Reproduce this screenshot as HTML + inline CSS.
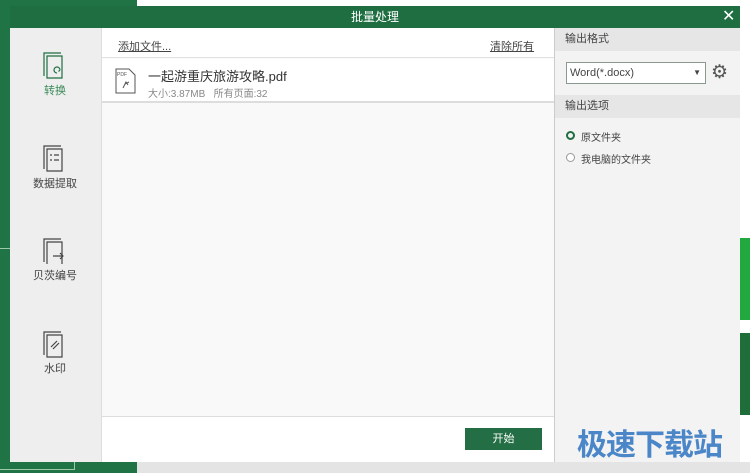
<!DOCTYPE html>
<html><head><meta charset="utf-8"><style>
*{margin:0;padding:0;box-sizing:border-box}
body{width:750px;height:473px;overflow:hidden;background:#fff;position:relative;font-family:"Liberation Sans","Noto Sans CJK SC",sans-serif;color:#333}
.a{position:absolute}
.t{font-size:11px;color:#444}
</style></head><body>
<div class="a" style="left:0;top:0;width:137px;height:473px;background:#1f7345"></div>
<div class="a" style="left:137px;top:462px;width:613px;height:11px;background:#e4e4e4"></div>
<div class="a" style="left:740px;top:238px;width:10px;height:82px;background:#21a83f"></div>
<div class="a" style="left:740px;top:333px;width:10px;height:82px;background:#1f6e3a"></div>
<div class="a" style="left:0;top:248px;width:75px;height:222px;border:1px solid #9cc8ac;border-left:none"></div>
<!-- title -->
<div class="a" style="left:10px;top:6px;width:730px;height:22px;background:#1e6e42;color:#fff;font-size:12px;text-align:center;line-height:22px">批量处理</div>
<div class="a" style="left:722px;top:6px;color:#fff;font-size:16px;line-height:22px">✕</div>
<!-- sidebar -->
<div class="a" style="left:10px;top:28px;width:92px;height:434px;background:#eeeeee;border-right:1px solid #ddd"></div>
<svg class="a" style="left:40px;top:50px" width="30" height="30" viewBox="0 0 30 30" fill="none" stroke="#1e6e42" stroke-width="1.2"><path d="M4 26V3h17"/><path d="M7 28V6h15v22z"/><path d="M17 23a3 3 0 1 1 3-3M20 20l-1.5 1.5"/></svg>
<div class="a" style="left:44px;top:82px;font-size:11px;color:#3a8a5a">转换</div>
<svg class="a" style="left:40px;top:143px" width="30" height="30" viewBox="0 0 30 30" fill="none" stroke="#444" stroke-width="1.2"><path d="M4 26V3h17"/><path d="M7 28V6h15v22z"/><path d="M10 12h2M14 12h5M10 17h2M14 17h5"/></svg>
<div class="a" style="left:33px;top:175px;font-size:11px;color:#444">数据提取</div>
<svg class="a" style="left:40px;top:236px" width="30" height="30" viewBox="0 0 30 30" fill="none" stroke="#444" stroke-width="1.2"><path d="M4 26V3h17"/><path d="M7 28V6h15v22"/><path d="M13 20h10M20 17l3 3-3 3"/></svg>
<div class="a" style="left:33px;top:267px;font-size:11px;color:#444">贝茨编号</div>
<svg class="a" style="left:40px;top:329px" width="30" height="30" viewBox="0 0 30 30" fill="none" stroke="#444" stroke-width="1.2"><path d="M4 26V3h17"/><path d="M7 28V6h15v22z"/><path d="M11 18l6-6M13 20l6-6"/></svg>
<div class="a" style="left:44px;top:360px;font-size:11px;color:#444">水印</div>
<!-- middle -->
<div class="a" style="left:102px;top:28px;width:452px;height:434px;background:#f9f9f9"></div>
<div class="a" style="left:102px;top:28px;width:452px;height:30px;background:#fff;border-bottom:1px solid #e2e2e2"></div>
<div class="a t" style="left:118px;top:38px;text-decoration:underline">添加文件...</div>
<div class="a t" style="left:490px;top:38px;text-decoration:underline">清除所有</div>
<div class="a" style="left:102px;top:59px;width:452px;height:44px;background:#fff;border-bottom:2px solid #ddd"></div>
<div class="a" style="left:97px;top:70px;width:0;height:0;border:5px solid transparent;border-right-color:#fff"></div>
<svg class="a" style="left:115px;top:68px" width="22" height="26" viewBox="0 0 22 26" fill="none" stroke="#555" stroke-width="1"><path d="M1 1h13l6 6v18H1z"/><text x="2" y="8" font-size="5" fill="#555" stroke="none">PDF</text><path d="M8 20l3-6 2 3M10 16l4-2"/></svg>
<div class="a" style="left:148px;top:66px;font-size:13px;color:#333">一起游重庆旅游攻略.pdf</div>
<div class="a" style="left:148px;top:85px;font-size:10px;color:#888">大小:3.87MB &nbsp; 所有页面:32</div>
<div class="a" style="left:102px;top:416px;width:452px;height:46px;background:#fff;border-top:1px solid #ddd"></div>
<div class="a" style="left:465px;top:428px;width:77px;height:22px;background:#236e44;color:#fff;font-size:11px;text-align:center;line-height:22px">开始</div>
<!-- right -->
<div class="a" style="left:554px;top:28px;width:186px;height:434px;background:#f3f3f3;border-left:1px solid #ccc"></div>
<div class="a" style="left:555px;top:28px;width:185px;height:23px;background:#e6e6e6;font-size:11px;line-height:23px;padding-left:10px;color:#444">输出格式</div>
<div class="a" style="left:566px;top:62px;width:140px;height:22px;background:#fff;border:1px solid #8a9a8f;font-size:11px;line-height:20px;padding-left:3px;color:#444">Word(*.docx)<span style="position:absolute;right:4px;font-size:8px">▼</span></div>
<div class="a" style="left:711px;top:62px;font-size:19px;color:#555;line-height:22px">⚙</div>
<div class="a" style="left:555px;top:95px;width:185px;height:23px;background:#e6e6e6;font-size:11px;line-height:23px;padding-left:10px;color:#444">输出选项</div>
<div class="a" style="left:566px;top:131px;width:9px;height:9px;border:2.5px solid #1e6e42;border-radius:50%"></div>
<div class="a" style="left:581px;top:129px;font-size:10px;color:#444">原文件夹</div>
<div class="a" style="left:566px;top:153px;width:9px;height:9px;border:1px solid #999;border-radius:50%;background:#fff"></div>
<div class="a" style="left:581px;top:151px;font-size:10px;color:#444">我电脑的文件夹</div>
<div class="a" style="left:577px;top:420px;font-size:30px;font-weight:bold;color:#4a86c8;letter-spacing:-1px">极速下载站</div>
</body></html>
